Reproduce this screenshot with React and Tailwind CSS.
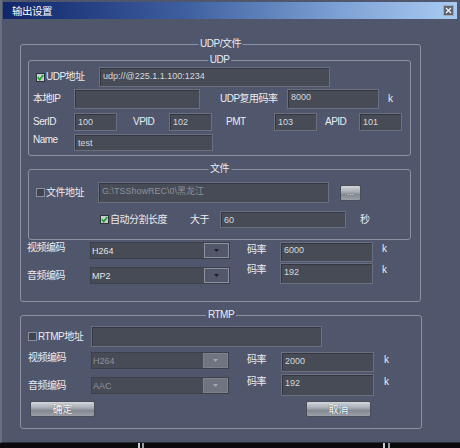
import React from "react";

const Lbl = ({ children, className = "" }) => (
  <div className={`shrink-0 h-[12px] leading-[12px] text-[10px] tracking-[-0.5px] text-[#ececf0] whitespace-nowrap ${className}`}>
    {children}
  </div>
);

const Input = ({ value = "", className = "", dim = false }) => (
  <div
    className={`shrink-0 border border-[#6b7080] bg-[#464b55] shadow-[inset_1px_1px_0_#34373f] pl-[3px] text-[9px] leading-[12px] whitespace-nowrap overflow-hidden ${dim ? "text-[#8d929c]" : "text-[#d6d9de]"} ${className}`}
  >
    {value}
  </div>
);

const Check = ({ checked }) =>
  checked ? (
    <svg width="9" height="9" viewBox="0 0 9 9" className="shrink-0">
      <rect x="0.5" y="0.5" width="8" height="8" fill="#c9cdd1" stroke="#2e323a" />
      <path d="M1.8 4.4 L3.7 6.6 L7.3 1.9" stroke="#22a02e" strokeWidth="1.7" fill="none" />
    </svg>
  ) : (
    <svg width="9" height="9" viewBox="0 0 9 9" className="shrink-0">
      <rect x="0.5" y="0.5" width="8" height="8" fill="#40444e" stroke="#8a8f99" />
    </svg>
  );

const Combo = ({ value, disabled = false, className = "" }) => (
  <div className={`shrink-0 flex border border-[#3c4049] bg-[#464b55] ${className}`}>
    <div className={`flex-1 pl-[1px] pt-[2px] text-[9px] leading-[12px] ${disabled ? "text-[#8d929c]" : "text-[#e2e4e8]"}`}>{value}</div>
    <div
      className={`w-[25px] h-full flex items-center justify-center border ${disabled ? "bg-[#6f7480] border-[#7d828d]" : "bg-[#525869] border-[#8a90a0]"}`}
    >
      <svg width="5" height="3" viewBox="0 0 5 3">
        <path d="M0 0 H5 L2.5 3 Z" fill={disabled ? "#a3a7b0" : "#1c1f26"} />
      </svg>
    </div>
  </div>
);

const Btn = ({ children, className = "" }) => (
  <div
    className={`shrink-0 flex items-center justify-center rounded-[2px] border border-[#4a4e58] bg-[linear-gradient(to_bottom,#d4d7dc,#a3a8b0_45%,#838991_60%,#9ca0a8)] text-[10px] text-white [text-shadow:0_0_1px_#30343c] ${className}`}
  >
    {children}
  </div>
);

const Group = ({ label, className = "", children }) => (
  <div className={`relative shrink-0 border border-[#8c91a0] rounded-[3px] ${className}`}>
    <span className="absolute -top-[7px] left-1/2 -translate-x-1/2 px-[2px] bg-[#50566b] h-[12px] leading-[12px] text-[10px] tracking-[-0.5px] text-[#ececf0] whitespace-nowrap">
      {label}
    </span>
    {children}
  </div>
);

export default function App() {
  return (
    <div className="w-[460px] h-[448px] bg-[#0b0b0d] overflow-hidden font-['Liberation_Sans','Noto_Sans_CJK_SC',sans-serif] flex flex-col">
      <div className="h-[443px] shrink-0 bg-[#50566b] border-l-2 border-b border-l-[#6a6f80] border-b-[#2a2d36] pt-[2px] flex flex-col">
        {/* title bar */}
        <div className="ml-[1px] w-[454px] h-[17px] shrink-0 flex items-center bg-[linear-gradient(to_right,#10256a,#3e5f9f_40%,#7fa3d6_75%,#a9cbf2)]">
          <span className="pl-[9px] text-[10.5px] tracking-[-0.5px] text-white leading-[12px]">输出设置</span>
          <div className="ml-auto mr-[3px] w-[11px] h-[11px] flex items-center justify-center rounded-[1px] border border-[#a2aab6] bg-[#5d6571]">
            <svg width="7" height="7" viewBox="0 0 7 7">
              <path d="M1 1 L6 6 M6 1 L1 6" stroke="#f2f4f6" strokeWidth="1.3" />
            </svg>
          </div>
        </div>

        {/* body */}
        <div className="pl-[18px] flex flex-col">
          {/* UDP/文件 */}
          <Group label="UDP/文件" className="mt-[25px] w-[401px] flex flex-col">
            <Group label="UDP" className="ml-[7px] mt-[15px] w-[383px] flex flex-col pb-[4px]">
              <div className="flex items-center mt-[6px] h-[20px]">
                <div className="ml-[7px] w-[63px] flex items-center gap-[1px]">
                  <Check checked />
                  <Lbl>UDP地址</Lbl>
                </div>
                <Input className="w-[231px] h-[20px] pt-[2px]" value="udp://@225.1.1.100:1234" />
              </div>
              <div className="flex items-center mt-[2px] h-[20px]">
                <Lbl className="ml-[4px] w-[41px]">本地IP</Lbl>
                <Input className="w-[126px] h-[20px] pt-[1px]" />
                <Lbl className="ml-[20px] w-[67px]">UDP复用码率</Lbl>
                <Input className="w-[92px] h-[20px] pt-[1px]" value="8000" />
                <Lbl className="ml-[9px]">k</Lbl>
              </div>
              <div className="flex items-center mt-[4px] h-[18px]">
                <Lbl className="ml-[4px] w-[41px]">SerID</Lbl>
                <Input className="w-[43px] h-[18px] pt-[2px]" value="100" />
                <Lbl className="ml-[16px] w-[36px]">VPID</Lbl>
                <Input className="w-[43px] h-[18px] pt-[2px]" value="102" />
                <Lbl className="ml-[14px] w-[48px]">PMT</Lbl>
                <Input className="w-[43px] h-[18px] pt-[2px]" value="103" />
                <Lbl className="ml-[8px] w-[34px]">APID</Lbl>
                <Input className="w-[43px] h-[18px] pt-[2px]" value="101" />
              </div>
              <div className="flex items-start mt-[3px] h-[17px]">
                <Lbl className="ml-[4px] w-[41px]">Name</Lbl>
                <Input className="w-[139px] h-[17px] pt-[2px]" value="test" />
              </div>
            </Group>

            <Group label="文件" className="ml-[7px] mt-[13px] w-[383px] flex flex-col pb-[11px]">
              <div className="flex items-center mt-[12px] h-[21px]">
                <div className="ml-[7px] w-[62px] flex items-center gap-[1px]">
                  <Check />
                  <Lbl>文件地址</Lbl>
                </div>
                <Input dim className="w-[231px] h-[21px] pt-[2px]" value="G:\TSShowREC\0\黑龙江" />
                <Btn className="ml-[11px] w-[21px] h-[16px] bg-[linear-gradient(to_bottom,#cdd1d6,#9aa0a8)]">
                  <span className="text-[9px] leading-[9px]">...</span>
                </Btn>
              </div>
              <div className="flex items-center mt-[8px] h-[17px]">
                <div className="ml-[71px] w-[90px] flex items-center gap-[1px]">
                  <Check checked />
                  <Lbl>自动分割长度</Lbl>
                </div>
                <Lbl className="w-[30px]">大于</Lbl>
                <Input className="w-[126px] h-[17px] pt-[2px]" value="60" />
                <Lbl className="ml-[14px]">秒</Lbl>
              </div>
            </Group>

            <div className="flex items-start mt-[2px] h-[20px]">
              <Lbl className="ml-[6px] w-[63px]">视频编码</Lbl>
              <Combo className="w-[140px] h-[17px]" value="H264" />
              <Lbl className="ml-[17px] w-[33px] mt-[2px]">码率</Lbl>
              <Input className="w-[93px] h-[20px] pt-[1px]" value="6000" />
              <Lbl className="ml-[9px] mt-[1px]">k</Lbl>
            </div>
            <div className="flex items-start mt-[1px] h-[21px] mb-[17px]">
              <Lbl className="ml-[6px] w-[63px] mt-[7px]">音频编码</Lbl>
              <Combo className="w-[140px] h-[17px] mt-[4px]" value="MP2" />
              <Lbl className="ml-[17px] w-[33px] mt-[1px]">码率</Lbl>
              <Input className="w-[93px] h-[21px] pt-[2px]" value="192" />
              <Lbl className="ml-[9px] mt-[1px]">k</Lbl>
            </div>
          </Group>

          {/* RTMP */}
          <Group label="RTMP" className="mt-[13px] w-[402px] flex flex-col pb-[11px]">
            <div className="flex items-center mt-[10px] h-[21px]">
              <div className="ml-[7px] w-[63px] flex items-center gap-[1px]">
                <Check />
                <Lbl>RTMP地址</Lbl>
              </div>
              <Input className="w-[231px] h-[21px]" />
            </div>
            <div className="flex items-start mt-[5px] h-[20px]">
              <Lbl className="ml-[7px] w-[63px]">视频编码</Lbl>
              <Combo disabled className="w-[138px] h-[17px]" value="H264" />
              <Lbl className="ml-[18px] w-[34px] mt-[2px]">码率</Lbl>
              <Input className="w-[93px] h-[20px] pt-[2px]" value="2000" />
              <Lbl className="ml-[10px] mt-[2px]">k</Lbl>
            </div>
            <div className="flex items-start mt-[2px] h-[22px]">
              <Lbl className="ml-[7px] w-[63px] mt-[6px]">音频编码</Lbl>
              <Combo disabled className="w-[138px] h-[17px] mt-[3px]" value="AAC" />
              <Lbl className="ml-[18px] w-[34px] mt-[2px]">码率</Lbl>
              <Input className="w-[93px] h-[22px] pt-[2px]" value="192" />
              <Lbl className="ml-[10px] mt-[2px]">k</Lbl>
            </div>
            <div className="flex items-center mt-[5px] h-[16px]">
              <Btn className="ml-[9px] w-[65px] h-[16px]">确定</Btn>
              <Btn className="ml-[211px] w-[65px] h-[16px]">取消</Btn>
            </div>
          </Group>
        </div>
      </div>
      <div className="flex h-[5px]">
        <div className="ml-[138px] w-[2px] h-[5px] bg-[#c8ccd4]" />
        <div className="ml-[2px] w-[2px] h-[5px] bg-[#9a9ea6]" />
        <div className="ml-[239px] w-[2px] h-[5px] bg-[#c8ccd4]" />
        <div className="ml-[3px] w-[2px] h-[5px] bg-[#9a9ea6]" />
      </div>
    </div>
  );
}
